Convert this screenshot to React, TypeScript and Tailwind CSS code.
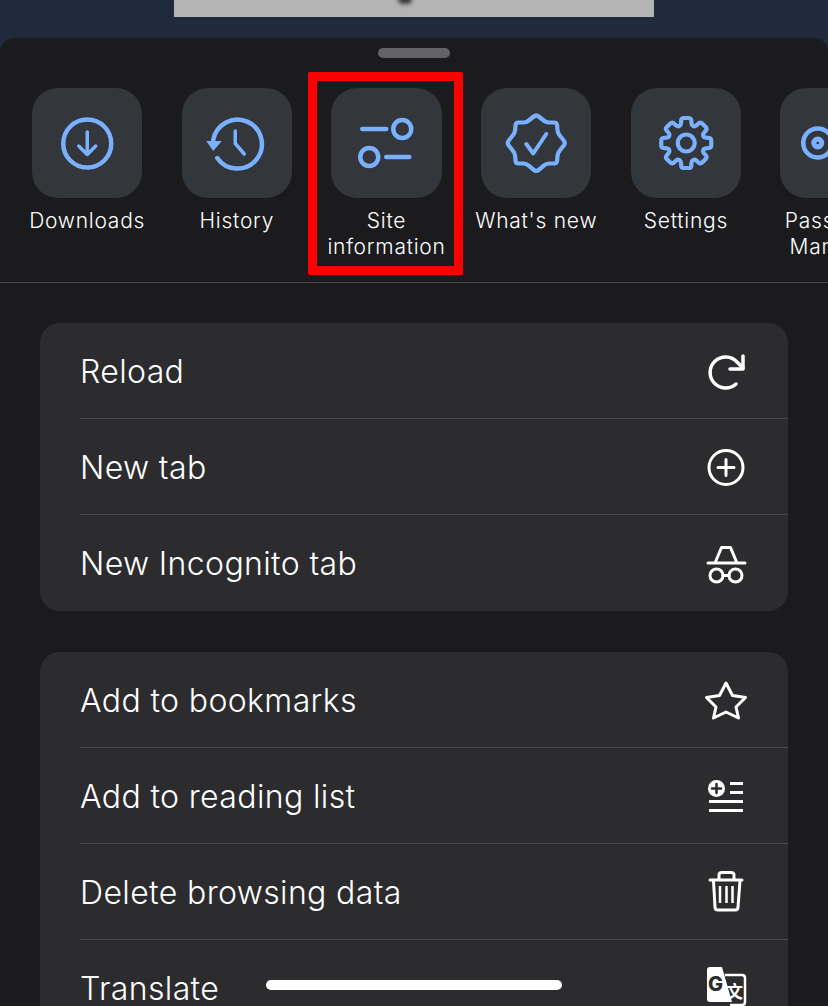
const BLUE = '#7ab1ff';

type Pt = [number, number];

// softens every corner of a closed outline, the badge and the gear need it
function softPath(points: Pt[], cut: number) {
    const n = points.length;
    let d = '';
    points.forEach((p, i) => {
        const prev = points[(i + n - 1) % n];
        const next = points[(i + 1) % n];
        const a = [p[0] + (prev[0] - p[0]) * cut, p[1] + (prev[1] - p[1]) * cut];
        const b = [p[0] + (next[0] - p[0]) * cut, p[1] + (next[1] - p[1]) * cut];
        d += `${i === 0 ? 'M' : 'L'}${a[0].toFixed(1)} ${a[1].toFixed(1)}Q${p[0]} ${p[1]} ${b[0].toFixed(1)} ${b[1].toFixed(1)}`;
    });
    return d + 'Z';
}

function Gear() {
    const cx = 685;
    const cy = 143;
    const points: Pt[] = [];
    for (let i = 0; i < 8; i++) {
        const a = (i * Math.PI) / 4 - Math.PI / 2;
        const pt = (r: number, d: number): Pt => [
            Number((cx + r * Math.cos(a + d)).toFixed(1)),
            Number((cy + r * Math.sin(a + d)).toFixed(1)),
        ];
        points.push(pt(18.5, -0.3), pt(25.5, -0.19), pt(25.5, 0.19), pt(18.5, 0.3));
    }
    return (
        <svg viewBox="630 88 110 110" className="h-full w-full" fill="none" stroke={BLUE} strokeWidth="4.2" strokeLinecap="round" strokeLinejoin="round">
            <path d={softPath(points, 0.28)} />
            <circle cx={cx} cy={cy} r="8.5" />
        </svg>
    );
}

const badge: Pt[] = [
    [536, 114.5], [546, 122.5], [556.5, 122.5], [557.5, 133], [565.5, 143], [557.5, 153], [556.5, 163.5], [546, 163.5],
    [536, 172], [526, 163.5], [515.5, 163.5], [514.5, 153], [506.500, 143], [514.5, 133], [515.5, 122.5], [526, 122.5],
];

const tools = [
    {
        label: ['Downloads'],
        icon: (
            <svg viewBox="32 88 110 110" className="h-full w-full" fill="none" stroke={BLUE} strokeWidth="4.5" strokeLinecap="round" strokeLinejoin="round">
                <circle cx="87" cy="143.500" r="24" />
                <path d="M87 132V154M78.500 146L87 154.500L95.500 146" strokeWidth="3.500" />
            </svg>
        ),
    },
    {
        label: ['History'],
        icon: (
            <svg viewBox="182 88 110 110" className="h-full w-full" fill="none" stroke={BLUE} strokeWidth="4.5" strokeLinecap="round" strokeLinejoin="round">
                <path d="M213 140A24.500 24.500 0 1 1 217 158" />
                <path d="M206 141H221.500L213 151Z" fill={BLUE} stroke="none" />
                <path d="M235 131V143.500L244 154" strokeWidth="3.500" />
            </svg>
        ),
    },
    {
        label: ['Site', 'information'],
        icon: (
            <svg viewBox="331 88 110 110" className="h-full w-full" fill="none" stroke={BLUE} strokeWidth="4.5" strokeLinecap="round">
                <path d="M362 129H386M386 157H409" />
                <circle cx="402" cy="129" r="9" />
                <circle cx="369" cy="157" r="9" />
            </svg>
        ),
    },
    {
        label: ["What's new"],
        icon: (
            <svg viewBox="481 88 110 110" className="h-full w-full" fill="none" stroke={BLUE} strokeWidth="4.2" strokeLinecap="round" strokeLinejoin="round">
                <path d={softPath(badge, 0.25)} />
                <path d="M526 144L533 153.500L546 134" strokeWidth="4" />
            </svg>
        ),
    },
    { label: ['Settings'], icon: <Gear /> },
    {
        label: ['Password', 'Manager'],
        icon: (
            <svg viewBox="780 88 110 110" className="h-full w-full" fill="none" stroke={BLUE} strokeWidth="4.5">
                <circle cx="817.500" cy="143" r="14.500" />
                <circle cx="817.500" cy="143" r="6.500" fill={BLUE} stroke="none" />
                <circle cx="817.500" cy="143" r="1.300" fill="#33363a" stroke="none" />
            </svg>
        ),
    },
];

const rowStroke = { fill: 'none', stroke: '#fff', strokeWidth: 3, strokeLinecap: 'round', strokeLinejoin: 'round' } as const;

const firstGroup = [
    {
        label: 'Reload',
        icon: (
            <svg viewBox="702 347 48 48" className="h-12 w-12" {...rowStroke} strokeWidth="3.500">
                <path d="M736 384A15.500 15.500 0 1 1 737 362L743 368" />
                <path d="M743 356V369H730" />
            </svg>
        ),
    },
    {
        label: 'New tab',
        icon: (
            <svg viewBox="702 443 48 48" className="h-12 w-12" {...rowStroke}>
                <circle cx="726" cy="467.500" r="17" />
                <path d="M718 467.500H734M726 459.500V475.500" />
            </svg>
        ),
    },
    {
        label: 'New Incognito tab',
        icon: (
            <svg viewBox="702 539 48 48" className="h-12 w-12" {...rowStroke}>
                <path d="M708 563H745M715 563L721.500 547.500H730.500L737 563" />
                <circle cx="716.500" cy="575.500" r="6.500" />
                <circle cx="735.500" cy="575.500" r="6.500" />
                <path d="M723 575.500H729" />
            </svg>
        ),
    },
];

const secondGroup = [
    {
        label: 'Add to bookmarks',
        icon: (
            <svg viewBox="702 677 48 48" className="h-12 w-12" {...rowStroke}>
                <path d="M726 684L732.500 696.500L745.500 698.500L736 708L738.500 719L726 713L713.500 719L716 708L706.500 698.500L719.500 696.500Z" />
            </svg>
        ),
    },
    {
        label: 'Add to reading list',
        icon: (
            <svg viewBox="702 773 48 48" className="h-12 w-12" {...rowStroke}>
                <circle cx="716.500" cy="789.500" r="8.500" fill="#fff" stroke="none" />
                <path d="M712 789.500H721M716.500 785V794" stroke="#2c2c2e" strokeWidth="2.500" />
                <path d="M730 784.500H743M730 793.500H743M709 802.500H743M709 811.500H743" strokeLinecap="butt" />
            </svg>
        ),
    },
    {
        label: 'Delete browsing data',
        icon: (
            <svg viewBox="702 869 48 48" className="h-12 w-12" {...rowStroke}>
                <path d="M710 881H742M719 880V876Q719 873.500 722 873.500H731Q734 873.500 734 876V880" />
                <path d="M713.500 882L715 908Q715 911 718 911H735Q738 911 738 908L740 882" />
                <path d="M720 887V904M726.500 887V904M732.500 887V904" strokeWidth="2.500" strokeLinecap="butt" />
            </svg>
        ),
    },
    {
        label: 'Translate',
        icon: (
            <svg viewBox="702 965 48 48" className="h-12 w-12">
                <path d="M725 976H742Q745 976 745 979V1003Q745 1006 742 1006H730" fill="#2c2c2e" stroke="#fff" strokeWidth="2.500" />
                <path d="M707 971Q707 968 710 968H722L732 1003H710Q707 1003 707 1000Z" fill="#fff" />
                <text x="708" y="992" fontFamily="Inter, sans-serif" fontSize="20" fontWeight="800" fill="#2c2c2e">G</text>
                <text x="726" y="999" fontFamily="'Noto Sans CJK SC', sans-serif" fontSize="17" fontWeight="700" fill="#fff">文</text>
            </svg>
        ),
    },
];

function MenuCard({ rows }: { rows: { label: string; icon: React.ReactNode }[] }) {
    return (
        <div className="mx-10 overflow-hidden rounded-[20px] bg-[#2c2c2e]">
            {rows.map((row) => (
                <div key={row.label} className="ml-10 flex h-24 items-center justify-between border-b border-[#48484a] pr-[38px] last:border-b-0">
                    <span className="pt-[2px] text-[32px] leading-none font-[350] tracking-[0.37px] text-white">{row.label}</span>
                    {row.icon}
                </div>
            ))}
        </div>
    );
}

export default function App() {
    return (
        <div className="relative h-[1006px] w-[828px] overflow-hidden bg-[#1f2a3d] font-['Inter',sans-serif]">
            <div className="relative mx-auto h-[17px] w-[480px] overflow-hidden bg-[#b4b4b4]">
                <div className="absolute -top-[5px] left-[224px] h-[9px] w-[14px] rounded-full bg-[#3a3a3a] blur-[2px]" />
            </div>

            <div className="mt-[21px] h-[968px] overflow-hidden rounded-t-[14px] bg-[#1b1b1d]">
                <div className="mx-auto mt-[10px] h-[10px] w-[72px] rounded-full bg-[#636366]" />

                <div className="mt-[30px] flex h-[195px] overflow-hidden border-b border-[#48484a] pl-[12.3px]">
                    {tools.map((tool) => (
                        <div key={tool.label[0]} className="flex w-[149.7px] shrink-0 flex-col items-center">
                            <div className="h-[110px] w-[110.5px] shrink-0 rounded-[26px] bg-[#33363a]">{tool.icon}</div>
                            <div className="mt-[10px] whitespace-nowrap text-center text-[21px] leading-[26px] font-[350] tracking-[0.75px] text-white">
                                {tool.label.map((line) => (
                                    <div key={line}>{line}</div>
                                ))}
                            </div>
                        </div>
                    ))}
                </div>

                <div className="mt-10 flex flex-col gap-[41px]">
                    <MenuCard rows={firstGroup} />
                    <MenuCard rows={secondGroup} />
                </div>
            </div>

            {/* annotation box drawn over the screenshot */}
            <div className="absolute left-[308px] top-[72px] h-[203px] w-[155px] rounded-[2px] border-[9px] border-[#ff0000]" />
            <div className="absolute left-[266px] top-[980px] h-[10px] w-[296px] rounded-full bg-white" />
        </div>
    );
}
